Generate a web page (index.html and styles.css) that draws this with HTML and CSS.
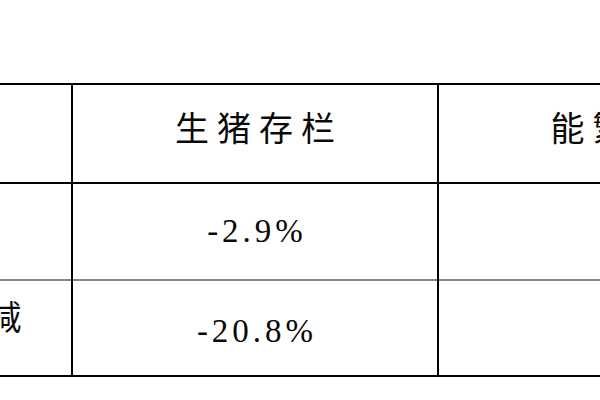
FILE: index.html
```html
<!DOCTYPE html>
<html lang="zh">
<head>
<meta charset="utf-8">
<link rel="stylesheet" href="styles.css">
</head>
<body>
<div class="page">
  <table class="stats">
    <colgroup>
      <col class="c1">
      <col class="c2">
      <col class="c3">
    </colgroup>
    <thead>
      <tr class="head">
        <th class="label"></th>
        <th class="cjk">生猪存栏</th>
        <th class="cjk">能繁母猪存栏</th>
      </tr>
    </thead>
    <tbody>
      <tr class="r1">
        <td class="label cjk">环比</td>
        <td class="num">-2.9%</td>
        <td class="num">-1.2%</td>
      </tr>
      <tr class="r2">
        <td class="label cjk">同比增减</td>
        <td class="num">-20.8%</td>
        <td class="num">118.65%</td>
      </tr>
    </tbody>
  </table>
</div>
</body>
</html>
```

FILE: styles.css
```css
html, body {
  margin: 0;
  padding: 0;
  background: #ffffff;
  overflow: hidden;
  width: 600px;
  height: 400px;
}

.page {
  padding-top: 83px;
}

.stats {
  margin-left: -188px;
  border-collapse: collapse;
  table-layout: fixed;
  width: 1094px;
  color: #0a0a0a;
}

.c1 { width: 260px; }
.c2 { width: 366px; }
.c3 { width: 468px; }

.stats th,
.stats td {
  padding: 0;
  text-align: center;
  vertical-align: middle;
  border-left: 2px solid #000;
  font-weight: normal;
}

.stats th:first-child,
.stats td:first-child {
  border-left: none;
}

.head {
  height: 99px;
  border-top: 2px solid #000;
  border-bottom: 2px solid #000;
}

.head th {
  padding-bottom: 14px;
}

.r1 {
  height: 97px;
  border-bottom: 2px solid #858585;
}

.r2 {
  height: 96px;
  border-bottom: 2px solid #000;
}

.cjk {
  font-family: "Noto Sans CJK SC", "Noto Sans CJK JP", sans-serif;
  font-size: 34px;
  letter-spacing: 8px;
  text-indent: 8px;
}

.label {
  padding-bottom: 26px !important;
}

.num {
  font-family: "Liberation Serif", "Times New Roman", serif;
  font-size: 33px;
  letter-spacing: 4px;
  text-indent: 4px;
}

.r2 .num {
  padding-top: 6px;
}
```
